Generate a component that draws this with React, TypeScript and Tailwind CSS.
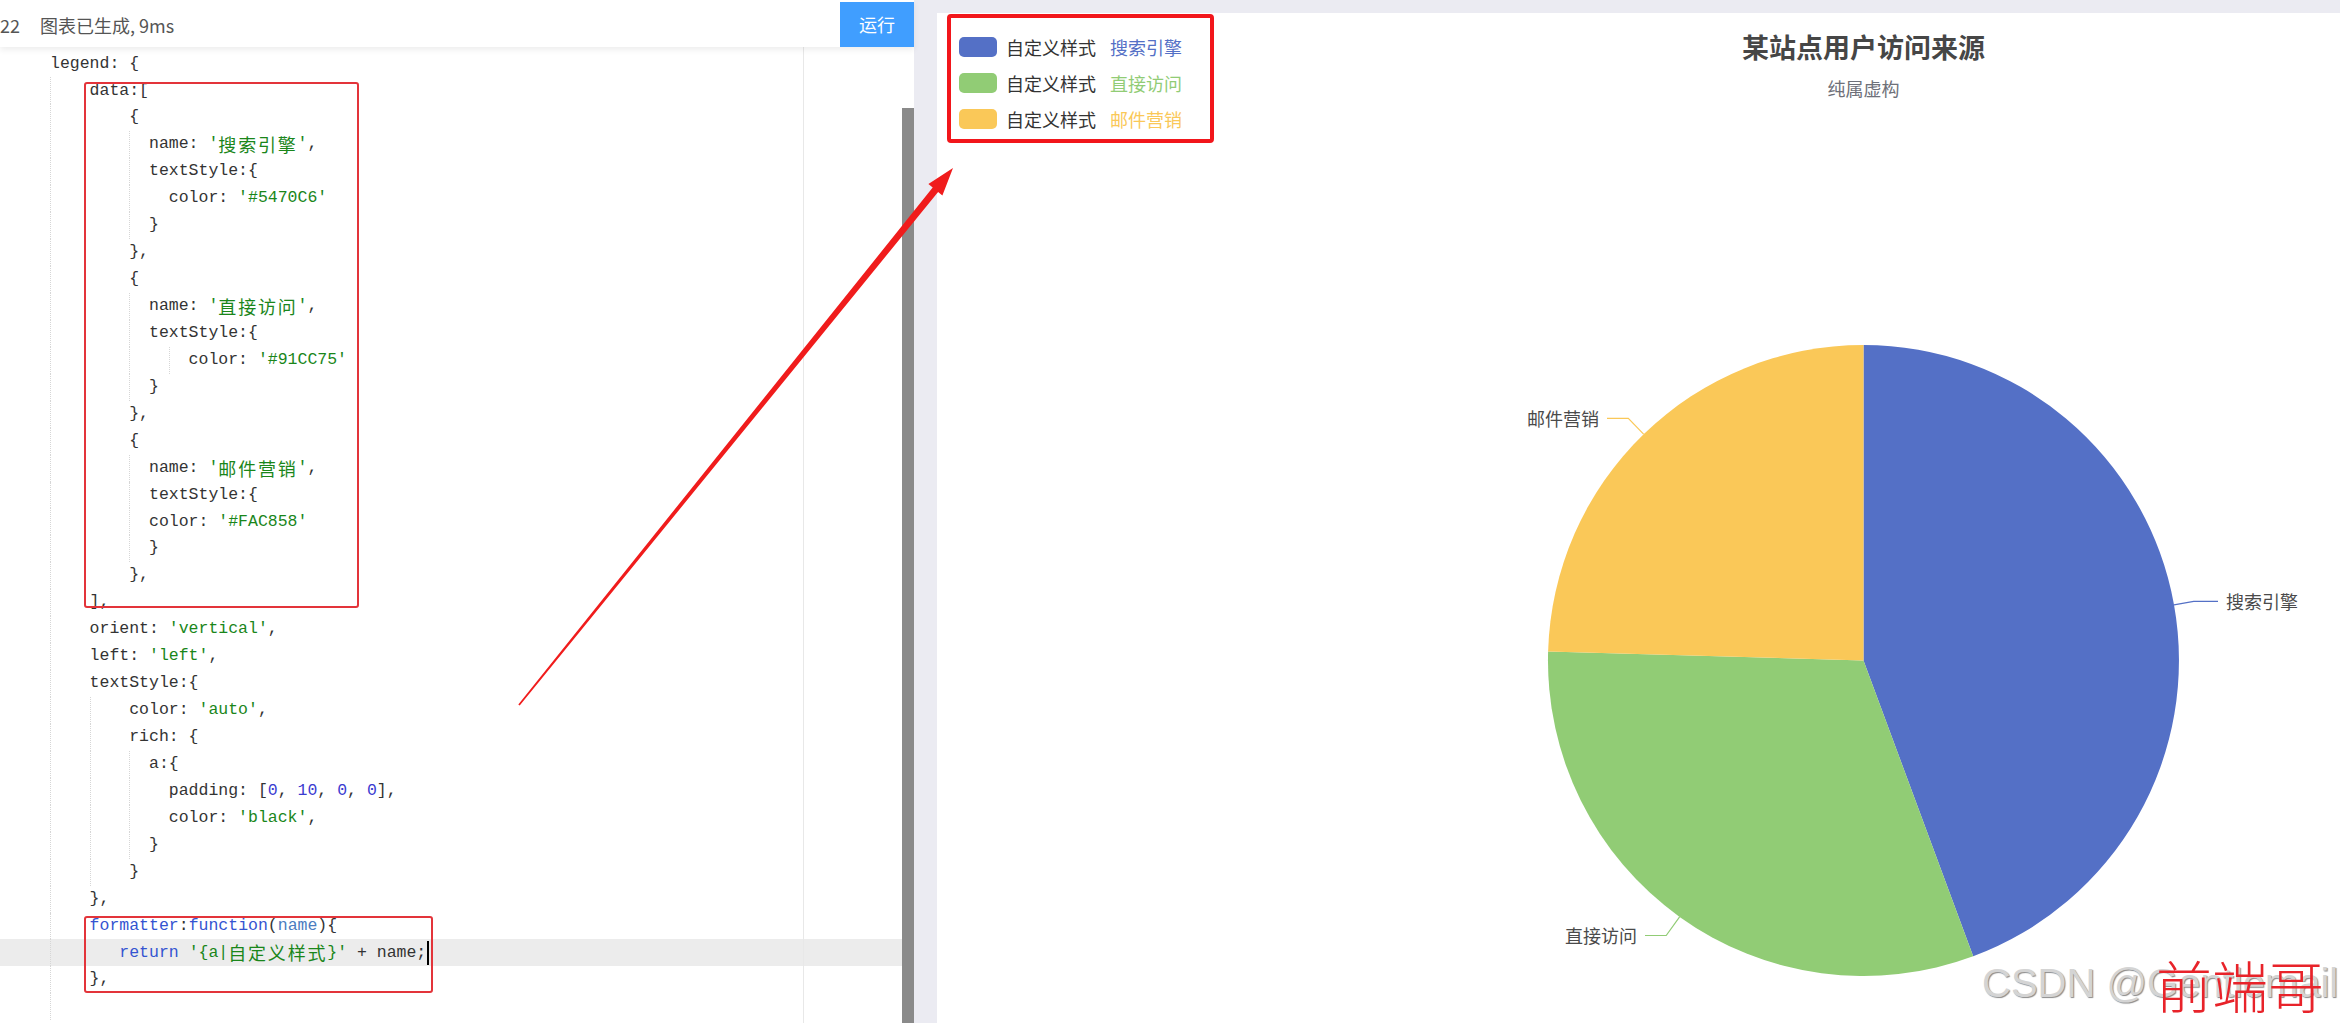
import React from "react";

const CW = 9.9015;
const MONO = "font-['Liberation_Mono',monospace]";
const CJK = "font-['Noto_Sans_CJK_SC',sans-serif]";

const TONE: Record<string, string> = {
  d: "text-[#333333]",
  s: "text-[#1a861a]",
  n: "text-[#3b3bd0]",
  k: "text-[#3454d1]",
  p: "text-[#4b7cbf]",
};

type Line = { i: number; g: number[]; t: [string, string?][]; active?: boolean };

const lines: Line[] = [
  { i: 0, g: [], t: [["legend: {"]] },
  { i: 4, g: [0], t: [["data:["]] },
  { i: 8, g: [0], t: [["{"]] },
  { i: 10, g: [0, 8], t: [["name: "], ["'搜索引擎'", "s"], [","]] },
  { i: 10, g: [0, 8], t: [["textStyle:{"]] },
  { i: 12, g: [0, 8], t: [["color: "], ["'#5470C6'", "s"]] },
  { i: 10, g: [0, 8], t: [["}"]] },
  { i: 8, g: [0], t: [["},"]] },
  { i: 8, g: [0], t: [["{"]] },
  { i: 10, g: [0, 8], t: [["name: "], ["'直接访问'", "s"], [","]] },
  { i: 10, g: [0, 8], t: [["textStyle:{"]] },
  { i: 14, g: [0, 8, 12], t: [["color: "], ["'#91CC75'", "s"]] },
  { i: 10, g: [0, 8], t: [["}"]] },
  { i: 8, g: [0], t: [["},"]] },
  { i: 8, g: [0], t: [["{"]] },
  { i: 10, g: [0, 8], t: [["name: "], ["'邮件营销'", "s"], [","]] },
  { i: 10, g: [0, 8], t: [["textStyle:{"]] },
  { i: 10, g: [0, 8], t: [["color: "], ["'#FAC858'", "s"]] },
  { i: 10, g: [0, 8], t: [["}"]] },
  { i: 8, g: [0], t: [["},"]] },
  { i: 4, g: [0], t: [["],"]] },
  { i: 4, g: [0], t: [["orient: "], ["'vertical'", "s"], [","]] },
  { i: 4, g: [0], t: [["left: "], ["'left'", "s"], [","]] },
  { i: 4, g: [0], t: [["textStyle:{"]] },
  { i: 8, g: [0, 4], t: [["color: "], ["'auto'", "s"], [","]] },
  { i: 8, g: [0, 4], t: [["rich: {"]] },
  { i: 10, g: [0, 4, 8], t: [["a:{"]] },
  {
    i: 12,
    g: [0, 4, 8],
    t: [["padding: ["], ["0", "n"], [", "], ["10", "n"], [", "], ["0", "n"], [", "], ["0", "n"], ["],"]],
  },
  { i: 12, g: [0, 4, 8], t: [["color: "], ["'black'", "s"], [","]] },
  { i: 10, g: [0, 4, 8], t: [["}"]] },
  { i: 8, g: [0, 4], t: [["}"]] },
  { i: 4, g: [0], t: [["},"]] },
  { i: 4, g: [0], t: [["formatter", "k"], [":"], ["function", "k"], ["("], ["name", "p"], ["){"]] },
  { i: 7, g: [0], t: [["return", "k"], [" "], ["'{a|自定义样式}'", "s"], [" + name;"]], active: true },
  { i: 4, g: [0], t: [["},"]] },
  { i: 4, g: [0], t: [] },
];

function Tok({ text, kind = "d" }: { text: string; kind?: string }) {
  const parts = text.split(/([\u3400-\u9fff]+)/);
  return (
    <>
      {parts.map((p, i) =>
        p === "" ? null : /[\u3400-\u9fff]/.test(p) ? (
          <span key={i} className={`${CJK} whitespace-pre text-[18px] tracking-[1.8px] ${TONE[kind]}`}>
            {p}
          </span>
        ) : (
          <span key={i} className={`${MONO} whitespace-pre text-[16.5px] ${TONE[kind]}`}>
            {p}
          </span>
        )
      )}
    </>
  );
}

function CodeLine({ line }: { line: Line }) {
  const gs = line.g.filter((g) => g < line.i);
  return (
    <div className={`flex h-[26.95px] items-center pl-[50px] ${line.active ? "bg-[#ececec]" : ""}`}>
      {gs.map((g, k) => (
        <span
          key={k}
          className="self-stretch border-l border-dotted border-[#d6d6d6]"
          style={{ width: ((gs[k + 1] ?? line.i) - g) * CW }}
        />
      ))}
      {line.t.map(([text, kind], k) => (
        <Tok key={k} text={text} kind={kind} />
      ))}
      {line.active && <span className="ml-px h-[24px] w-[2px] bg-black" />}
    </div>
  );
}

function Editor() {
  return (
    <div className="flex w-[914px] flex-col bg-white">
      <div className="relative z-10 flex h-[47px] shadow-[0_3px_6px_rgba(0,0,0,0.07)]">
        <div className={`${CJK} mt-[3px] flex items-center text-[18px] text-[#555]`}>
          <span>22</span>
          <span className="ml-[20px]">图表已生成, 9ms</span>
        </div>
        <button
          className={`${CJK} ml-auto mt-[2px] flex h-[45px] w-[74px] items-center justify-center bg-[#409eff] text-[18px] text-white`}
        >
          运行
        </button>
      </div>
      <div className="flex flex-1">
        <div className="relative w-[902px] overflow-hidden pt-[3.5px]">
          {lines.map((l, i) => (
            <CodeLine key={i} line={l} />
          ))}
          <div className="absolute bottom-0 left-[803px] top-0 w-px bg-[#e8e8e8]" />
          <div className="absolute left-[84px] top-[35px] h-[526px] w-[275px] rounded-[3px] border-2 border-[#e3343a]" />
          <div className="absolute left-[84px] top-[869px] h-[77px] w-[349px] rounded-[3px] border-2 border-[#e3343a]" />
        </div>
        <div className="flex w-[12px] flex-col">
          <div className="mt-[61px] flex-1 bg-[#8a8a8a]" />
        </div>
      </div>
    </div>
  );
}

const legend = [
  { name: "搜索引擎", color: "bg-[#5470c6]", text: "text-[#5470c6]" },
  { name: "直接访问", color: "bg-[#91cc75]", text: "text-[#91cc75]" },
  { name: "邮件营销", color: "bg-[#fac858]", text: "text-[#fac858]" },
];

function PieChart() {
  const cx = 926.5;
  const cy = 647.5;
  const r = 315.5;
  return (
    <svg className="absolute left-0 top-0" width="1853" height="1010" viewBox="0 0 1853 1010">
      <path d={`M${cx},${cy} L${cx},${cy - r} A${r},${r} 0 0 1 1036.2,943.3 Z`} fill="#5470c6" />
      <path d={`M${cx},${cy} L1036.2,943.3 A${r},${r} 0 0 1 611.1,638.5 Z`} fill="#91cc75" />
      <path d={`M${cx},${cy} L611.1,638.5 A${r},${r} 0 0 1 ${cx},${cy - r} Z`} fill="#fac858" />
      <polyline points="1237,591.8 1256.7,588.3 1281,588.3" fill="none" stroke="#5470c6" strokeWidth="1.2" />
      <polyline points="742.6,903.8 729.2,922.5 708,922.5" fill="none" stroke="#91cc75" strokeWidth="1.2" />
      <polyline points="706.6,421.2 691.3,405.4 670,405.4" fill="none" stroke="#fac858" strokeWidth="1.2" />
      <g fontFamily="'Noto Sans CJK SC', sans-serif" fontSize="18" fill="#4a4a4a" dominantBaseline="central">
        <text x="1289" y="588">搜索引擎</text>
        <text x="700" y="922" textAnchor="end">直接访问</text>
        <text x="662" y="405" textAnchor="end">邮件营销</text>
      </g>
    </svg>
  );
}

function Chart() {
  return (
    <div className="relative mt-[13px] flex-1 overflow-hidden bg-white">
      <div className="relative h-full w-[1853px]">
        <PieChart />
        <div className={`${CJK} relative flex flex-col items-center pt-[20px]`}>
          <div className="text-[27px] font-bold leading-[27px] text-[#464646]">某站点用户访问来源</div>
          <div className="mt-[19px] text-[18px] leading-[18px] text-[#6e7079]">纯属虚构</div>
        </div>
        <div
          className={`${CJK} absolute left-[10px] top-[1px] flex h-[129px] w-[267px] flex-col gap-[16px] rounded-[4px] border-4 border-[#f2161b] pl-[8px] pt-[19px]`}
        >
          {legend.map((l) => (
            <div key={l.name} className="flex h-[20px] items-center text-[18px] leading-[20px]">
              <span className={`h-[20px] w-[38px] rounded-[5px] ${l.color}`} />
              <span className="ml-[9px] text-[#333]">自定义样式</span>
              <span className={`ml-[14px] ${l.text}`}>{l.name}</span>
            </div>
          ))}
        </div>
      </div>
      <div className="absolute left-[1045px] top-[950px] whitespace-nowrap font-['Liberation_Sans',sans-serif] text-[40px] leading-[40px] text-[#d4d4d4] [text-shadow:1px_1px_1px_#8a8a8a]">
        CSDN @Gentlemail
      </div>
      <div className={`${CJK} absolute left-[1219px] top-[943px] text-[56px] font-light leading-[56px] text-[#e8232a]`}>
        前端哥
      </div>
    </div>
  );
}

function Arrow() {
  return (
    <svg className="pointer-events-none absolute left-0 top-0" width="2340" height="1023">
      <polygon
        points="519.7,705.6 938.1,192 942.4,195.5 953,168 928.4,184.1 932.7,187.6 518.3,704.4"
        fill="#f01c1c"
      />
    </svg>
  );
}

export default function App() {
  return (
    <div className="relative flex h-[1023px] w-[2340px] overflow-hidden bg-[#ebebf2]">
      <Editor />
      <div className="w-[23px]" />
      <Chart />
      <Arrow />
    </div>
  );
}
